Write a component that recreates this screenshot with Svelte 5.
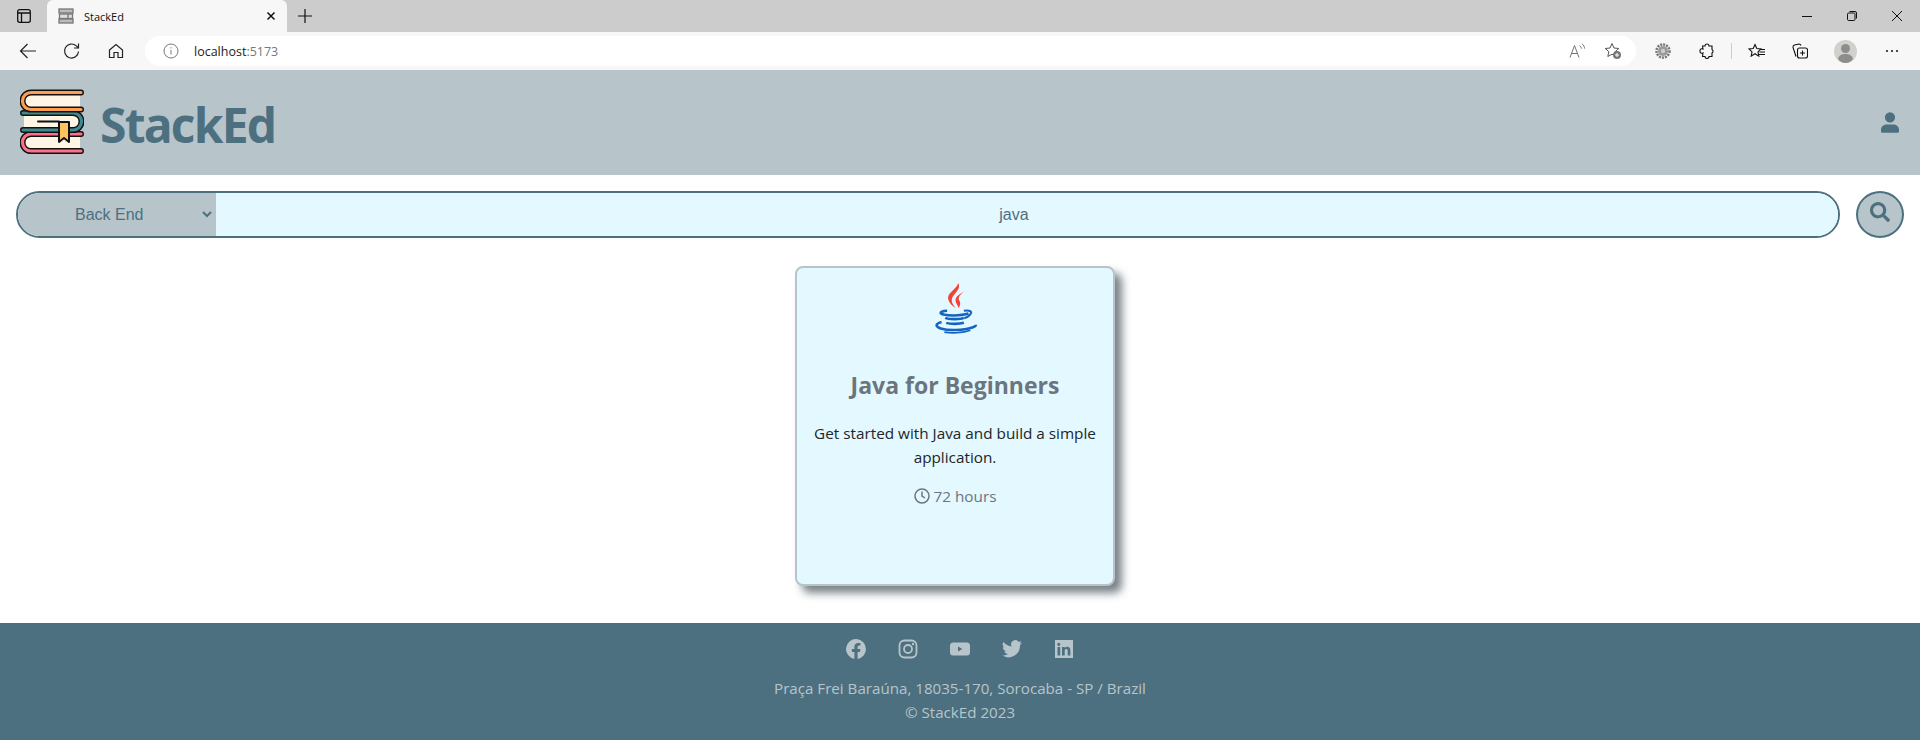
<script>
  const socials = ['facebook', 'instagram', 'youtube', 'twitter', 'linkedin'];
</script>

<div class="browser">
  <div class="tabstrip">
    <div class="sidebar-btn">
      <svg width="16" height="16" viewBox="0 0 16 16" fill="none" stroke="#111" stroke-width="1.3">
        <rect x="1.7" y="1.7" width="12.6" height="12.6" rx="2" />
        <path d="M1.7 5h12.6M5.5 5v9" />
      </svg>
    </div>
    <div class="tab">
      <svg width="16" height="16" viewBox="0 0 16 16" fill="none" stroke="#777" stroke-width="1.3">
        <rect x="1" y="1" width="14" height="4" fill="#bbb" />
        <rect x="1.500" y="6" width="13" height="4.500" fill="#ddd" />
        <rect x="1" y="11" width="14" height="4" fill="#bbb" />
        <path d="M10 6v5" />
      </svg>
      <span class="tab-title">StackEd</span>
      <svg class="tab-close" width="10" height="10" viewBox="0 0 10 10" stroke="#111" stroke-width="1.5">
        <path d="M1.5 1.5l7 7M8.5 1.5l-7 7" />
      </svg>
    </div>
    <svg class="newtab" width="16" height="16" viewBox="0 0 16 16" stroke="#111" stroke-width="1.2">
      <path d="M8 1v14M1 8h14" />
    </svg>
    <div class="win-controls">
      <svg width="12" height="12" viewBox="0 0 12 12" stroke="#111"><path d="M1 6.500h10" /></svg>
      <svg width="12" height="12" viewBox="0 0 12 12" stroke="#111" fill="none">
        <rect x="1.500" y="3" width="7.500" height="7.500" rx="1.200" /><path d="M3.500 1.500h5.500a1.500 1.500 0 0 1 1.500 1.500v5.500" />
      </svg>
      <svg width="12" height="12" viewBox="0 0 12 12" stroke="#111"><path d="M1 1l10 10M11 1l-10 10" /></svg>
    </div>
  </div>
  <div class="toolbar">
    <svg class="nav" width="18" height="18" viewBox="0 0 18 18" fill="none" stroke="#222" stroke-width="1.2">
      <path d="M17 9H1.500M8.500 2L1.500 9l7 7" />
    </svg>
    <svg class="nav" width="18" height="18" viewBox="0 0 18 18" fill="none" stroke="#222" stroke-width="1.2">
      <path d="M15.500 9.500a7 7 0 1 1-2.200-5.600L15.500 6" /><path d="M15.500 1.500V6H11" />
    </svg>
    <svg class="nav" width="16" height="16" viewBox="0 0 16 16" fill="none" stroke="#222" stroke-width="1.2">
      <path d="M1.500 7L8 1.500 14.500 7v7.500h-4.500v-5H6v5H1.500z" />
    </svg>
    <div class="omnibox">
      <svg width="16" height="16" viewBox="0 0 16 16" fill="none" stroke="#777" stroke-width="1">
        <circle cx="8" cy="8" r="7" /><path d="M8 7v4.500M8 4.200v1.300" />
      </svg>
      <span class="url">localhost<span class="port">:5173</span></span>
      <span class="spacer"></span>
      <svg width="17" height="16" viewBox="0 0 17 16" fill="none" stroke="#777" stroke-width="1">
        <path d="M1 14.500L5.500 2.500 10 14.500M2.800 10.500h5.500M10.500 2.500c1.200.8 1.800 2 1.800 3.200M13 .8c1.600 1.200 2.500 2.900 2.600 4.800" />
      </svg>
      <svg class="star-add" width="18" height="18" viewBox="0 0 18 18" fill="none" stroke="#555" stroke-width="1">
        <path d="M8 1.500l2 4.500 4.800.5-3.600 3.200 1 4.800L8 12.200l-4.200 2.300 1-4.800L1.200 6.500 6 6z" />
        <circle cx="13" cy="13" r="4" fill="#777" stroke="none" /><path d="M13 11v4M11 13h4" stroke="#fff" />
      </svg>
    </div>
    <svg class="ext" width="16" height="16" viewBox="0 0 16 16">
      <circle cx="8" cy="8" r="6.500" fill="none" stroke="#777" stroke-width="2.500" stroke-dasharray="2 1" />
      <circle cx="8" cy="8" r="5" fill="#999" /><circle cx="8" cy="8" r="2.200" fill="#ccc" />
    </svg>
    <svg class="puzzle" width="16" height="16" viewBox="0 0 16 16" fill="none" stroke="#111" stroke-width="1.100">
      <path d="M6 3a2 2 0 0 1 4 0h3v3.500a2 2 0 0 1 0 3.500v3.500H10a2 2 0 0 1-4 0H3.500L4 10a2 2 0 0 1-3-2 2 2 0 0 1 3-2L3.500 3z" />
    </svg>
    <div class="divider"></div>
    <svg class="fav" width="18" height="16" viewBox="0 0 18 16" fill="none" stroke="#111" stroke-width="1.100">
      <path d="M7 1.500l1.800 4 4.200.5-3 2.900.8 4.300L7 10.700l-3.800 2.500.8-4.300-3-2.900 4.200-.5zM12 6.500h5M11.500 9h5.500M11 11.500h6" />
    </svg>
    <svg class="coll" width="16" height="16" viewBox="0 0 16 16" fill="none" stroke="#111" stroke-width="1.100">
      <path d="M4 13.500L1 4.500Q.8 2.500 2.500 2L7 1q1.500 0 2 1.500" /><rect x="5.500" y="5" width="10" height="10" rx="2" /><path d="M10.500 7.500v5M8 10h5" />
    </svg>
    <svg class="avatar" width="23" height="23" viewBox="0 0 23 23">
      <circle cx="11.500" cy="11.500" r="11.500" fill="#d2d0cc" />
      <circle cx="11.500" cy="8.500" r="4.500" fill="#8d8d8b" />
      <path d="M4 19c1-4 4-5 7.500-5s6.500 1 7.500 5q-3 4-7.500 4T4 19z" fill="#8d8d8b" />
    </svg>
    <svg class="more" width="14" height="4" viewBox="0 0 14 4" fill="#222">
      <circle cx="2" cy="2" r="1.100" /><circle cx="7" cy="2" r="1.100" /><circle cx="12" cy="2" r="1.100" />
    </svg>
  </div>
</div>

<header class="site-header">
  <svg class="logo" width="64" height="65" viewBox="0 0 64 65" fill="none" stroke-linecap="round" stroke-linejoin="round">
    <!-- bottom book -->
    <path d="M60 46H11a8 8 0 0 0 0 16H60z" fill="#fff6e5" />
    <path d="M61 45H11a8.500 8.500 0 0 0 0 17H61" stroke="#111" stroke-width="6" />
    <path d="M61 45H11a8.500 8.500 0 0 0 0 17H61" stroke="#ff6f8a" stroke-width="3.200" />
    <!-- middle book -->
    <path d="M4 25H52a8 8 0 0 1 0 16H4z" fill="#fff6e5" />
    <path d="M3 24H53a8.500 8.500 0 0 1 0 17H3" stroke="#111" stroke-width="6" />
    <path d="M3 24H53a8.500 8.500 0 0 1 0 17H3" stroke="#3f8a8f" stroke-width="3.200" />
    <!-- top book -->
    <path d="M60 4H11a8 8 0 0 0 0 16H60z" fill="#fff6e5" />
    <path d="M61 3.500H11a8.500 8.500 0 0 0 0 17H61" stroke="#111" stroke-width="6" />
    <path d="M61 3.500H11a8.500 8.500 0 0 0 0 17H61" stroke="#ff9d52" stroke-width="3.200" />
    <!-- bookmark -->
    <path d="M18 32.500H39" stroke="#111" stroke-width="2" />
    <path d="M39 33h10v20l-5-4-5 4z" fill="#fcc35f" stroke="#111" stroke-width="2" />
  </svg>
  <span class="brand">StackEd</span>
  <span class="spacer"></span>
  <svg class="user" width="18" height="21" viewBox="0 0 448 512" fill="#4d7080">
    <path d="M224 256a128 128 0 1 0 0-256 128 128 0 0 0 0 256zM134 304C60 304 0 364 0 438v42c0 18 14 32 32 32h384c18 0 32-14 32-32v-42c0-74-60-134-134-134z" />
  </svg>
</header>

<div class="search-row">
  <div class="search">
    <div class="category">
      <span>Back End</span>
      <svg class="chevron" width="10" height="7" viewBox="0 0 10 7" fill="none" stroke="#4d7080" stroke-width="2">
        <path d="M1 1l4 4 4-4" />
      </svg>
    </div>
    <div class="term">java</div>
  </div>
  <button class="search-btn" aria-label="Search">
    <svg width="20" height="20" viewBox="0 0 512 512" fill="#4d7080">
      <path d="M505 442.700L405.300 343c-4.500-4.500-10.600-7-17-7H372c27.600-35.300 44-79.700 44-128C416 93.100 322.900 0 208 0S0 93.100 0 208s93.100 208 208 208c48.300 0 92.700-16.400 128-44v16.300c0 6.400 2.500 12.500 7 17l99.700 99.700c9.400 9.400 24.600 9.400 33.900 0l28.300-28.300c9.400-9.400 9.400-24.600.1-34zM208 336c-70.700 0-128-57.200-128-128 0-70.700 57.200-128 128-128 70.700 0 128 57.200 128 128 0 70.700-57.200 128-128 128z" />
    </svg>
  </button>
</div>

<main class="results">
  <article class="card">
    <svg class="java" width="45" height="52" viewBox="0 0 48 56">
      <path d="M27 1c3 6-3 10-6 15-2 4-1 7 3 12-3-2-8-6-8-11 0-6 9-9 11-16z" fill="#f44336" />
      <path d="M34 10c-5 3-10 5-10 10 0 3 3 5 3 8 2-2 3-5 1-8-2-4 2-7 6-10z" fill="#f44336" />
      <g fill="none" stroke="#1565c0">
        <path d="M15 31c-4 0-7 1-7 2.500S14 36 22 36s13-1 16-2" stroke-width="2.800" />
        <path d="M33 31c6-1 9 .5 7.500 3-1 2-4 4-7 5" stroke-width="2.200" />
        <path d="M13 38.500c3 2 17 2 20 0" stroke-width="2.800" />
        <path d="M14 44c4 1.500 14 1.500 19 0" stroke-width="2.800" />
        <path d="M9 43c-7 2-7 5-1 7 8 2.500 24 2.500 34-1 3-1 4-2 4-3" stroke-width="2.800" />
        <path d="M12 54c8 1.500 20 1 28-2" stroke-width="1.800" />
      </g>
    </svg>
    <h2>Java for Beginners</h2>
    <p class="desc">Get started with Java and build a simple application.</p>
    <p class="hours">
      <svg width="16" height="16" viewBox="0 0 16 16" fill="none" stroke="#6c757d" stroke-width="1.500">
        <circle cx="8" cy="8" r="7" /><path d="M8 3.500V8l3 2" />
      </svg>
      72 hours
    </p>
  </article>
</main>

<footer class="site-footer">
  <div class="socials">
    {#each socials as name}
      <svg width="20" height="20" viewBox="0 0 20 20" fill="#b7c5ca" aria-label={name}>
        {#if name === 'facebook'}
          <path d="M20 10a10 10 0 1 0-11.600 9.900v-7H5.900V10h2.500V7.800c0-2.500 1.500-3.900 3.800-3.900 1.100 0 2.200.2 2.200.2v2.500h-1.200c-1.200 0-1.600.8-1.600 1.600V10h2.800l-.5 2.900h-2.300v7A10 10 0 0 0 20 10z" />
        {:else if name === 'instagram'}
          <rect x="1.500" y="1.500" width="17" height="17" rx="5" fill="none" stroke="#b7c5ca" stroke-width="1.800" />
          <circle cx="10" cy="10" r="4" fill="none" stroke="#b7c5ca" stroke-width="1.800" />
          <circle cx="15" cy="5" r="1.200" />
        {:else if name === 'youtube'}
          <path fill-rule="evenodd" d="M3 3.500h14a3 3 0 0 1 3 2.500q.4 4 0 8a3 3 0 0 1-3 2.500H3A3 3 0 0 1 0 14q-.4-4 0-8a3 3 0 0 1 3-2.500zM8 7.500v5l4.300-2.500z" />
        {:else if name === 'twitter'}
          <path d="M20 3.800c-.7.300-1.500.5-2.400.6.900-.5 1.500-1.300 1.800-2.300-.8.500-1.700.8-2.600 1A4.100 4.100 0 0 0 9.800 7.400 11.600 11.600 0 0 1 1.400 3.100a4.100 4.100 0 0 0 1.300 5.500c-.7 0-1.300-.2-1.900-.5 0 2 1.400 3.700 3.300 4.100-.6.200-1.200.2-1.800.1.500 1.600 2 2.800 3.800 2.800A8.200 8.200 0 0 1 0 16.300 11.600 11.600 0 0 0 18 6c.8-.6 1.500-1.300 2-2.200z" />
        {:else}
          <path fill-rule="evenodd" d="M1 1h18v18H1zM3.500 8v8.500h2.700V8zM4.800 3.700a1.600 1.600 0 1 0 0 3.200 1.600 1.600 0 0 0 0-3.200zM8 8v8.500h2.700v-4.300c0-1.200.4-2.100 1.600-2.100s1.400 1 1.400 2.200v4.200h2.700v-4.800c0-2.500-1-3.900-3.200-3.900-1.200 0-2 .6-2.500 1.300V8z" />
        {/if}
      </svg>
    {/each}
  </div>
  <p>Praça Frei Baraúna, 18035-170, Sorocaba - SP / Brazil</p>
  <p>© StackEd 2023</p>
</footer>

<style>
  :global(body) {
    margin: 0;
    background: #fff;
    font-family: "Open Sans", "Noto Sans", sans-serif;
  }

  .browser { font-family: "Open Sans", sans-serif; }

  .tabstrip {
    height: 32px;
    background: #cccccc;
    display: flex;
    align-items: flex-end;
    box-sizing: border-box;
  }
  .sidebar-btn {
    width: 47px;
    height: 32px;
    display: flex;
    align-items: center;
    justify-content: center;
  }
  .tab {
    width: 240px;
    height: 32px;
    box-sizing: border-box;
    background: #f7f7f7;
    border-radius: 6px 6px 0 0;
    display: flex;
    align-items: center;
    padding: 0 11px;
    gap: 10px;
  }
  .tab-title { font-size: 11px; color: #111; flex: 1; }
  .newtab { align-self: center; margin-left: 10px; }
  .win-controls {
    margin-left: auto;
    align-self: center;
    display: flex;
    gap: 33px;
    padding-right: 17px;
  }

  .toolbar {
    height: 38px;
    background: #f7f7f7;
    display: flex;
    align-items: center;
    box-sizing: border-box;
  }
  .nav:nth-child(1) { margin-left: 19px; }
  .nav:nth-child(2) { margin-left: 26px; }
  .nav:nth-child(3) { margin-left: 27px; }
  .omnibox {
    width: 1491px;
    margin-left: 21px;
    height: 30px;
    background: #fff;
    border-radius: 15px;
    display: flex;
    align-items: center;
    padding: 0 14px 0 18px;
    box-sizing: border-box;
  }
  .url { font-size: 12.500px; color: #222; margin-left: 15px; }
  .port { color: #777; }
  .spacer { flex: 1; }
  .star-add { margin-left: 18px; }
  .ext { margin-left: 19px; }
  .puzzle { margin-left: 28px; }
  .divider { width: 1px; height: 16px; background: #ccc; margin-left: 16px; }
  .fav { margin-left: 16px; }
  .coll { margin-left: 26px; }
  .avatar { margin-left: 26px; }
  .more { margin-left: 28px; }

  .site-header {
    height: 105px;
    background: #b7c5ca;
    display: flex;
    align-items: center;
    padding: 0 21px 0 20px;
    box-sizing: border-box;
  }
  .logo { margin-top: -2px; }
  .brand {
    font-size: 48px;
    font-weight: 700;
    color: #4d7080;
    margin-left: 16px;
    margin-top: 4px;
    letter-spacing: -1.800px;
  }

  .search-row {
    display: flex;
    align-items: center;
    padding: 16px 16px 0;
    gap: 16px;
  }
  .search {
    flex: 1;
    height: 47px;
    box-sizing: border-box;
    border: 2.500px solid #4d7080;
    border-radius: 24px;
    overflow: hidden;
    display: flex;
    font-family: "Liberation Sans", Arial, sans-serif;
    font-size: 16px;
    color: #4d7080;
  }
  .category {
    width: 198px;
    background: #b7c5ca;
    display: flex;
    align-items: center;
    position: relative;
    padding-left: 57px;
    box-sizing: border-box;
  }
  .chevron { position: absolute; right: 4px; top: 18px; }
  .term {
    flex: 1;
    background: #e3f8ff;
    display: flex;
    align-items: center;
    justify-content: center;
    padding-right: 26px;
  }
  .search-btn {
    width: 48px;
    height: 47px;
    border: 2.500px solid #4d7080;
    border-radius: 50%;
    background: #b7c5ca;
    padding: 0 0 5px;
    display: flex;
    align-items: center;
    justify-content: center;
  }

  .results {
    display: flex;
    justify-content: center;
    padding: 28px 10px 37px 0;
  }
  .card {
    width: 320px;
    height: 320px;
    box-sizing: border-box;
    background: #e3f8ff;
    border: 2px solid #b7c5ca;
    border-radius: 8px;
    box-shadow: 7px 7px 8px rgba(77, 90, 96, 0.75);
    padding: 14px 16px;
    text-align: center;
    display: flex;
    flex-direction: column;
    align-items: center;
  }
  .java { display: block; }
  h2 {
    margin: 35px 0 0;
    font-size: 23px;
    line-height: 32px;
    font-weight: 700;
    color: #6c757d;
  }
  .desc {
    margin: 20px 0 0;
    font-size: 15.300px;
    line-height: 24px;
    color: #212529;
  }
  .hours {
    margin: 15px 0 0;
    font-size: 15.300px;
    line-height: 24px;
    color: #6c757d;
    display: flex;
    align-items: center;
    gap: 4px;
  }

  .site-footer {
    height: 117px;
    box-sizing: border-box;
    background: #4d7080;
    padding-top: 16px;
    text-align: center;
    color: #b7c5ca;
    font-size: 15.150px;
    line-height: 24px;
  }
  .socials {
    display: flex;
    justify-content: center;
    gap: 32px;
    margin-bottom: 17px;
    height: 20px;
  }
  .site-footer p { margin: 0; }
</style>
